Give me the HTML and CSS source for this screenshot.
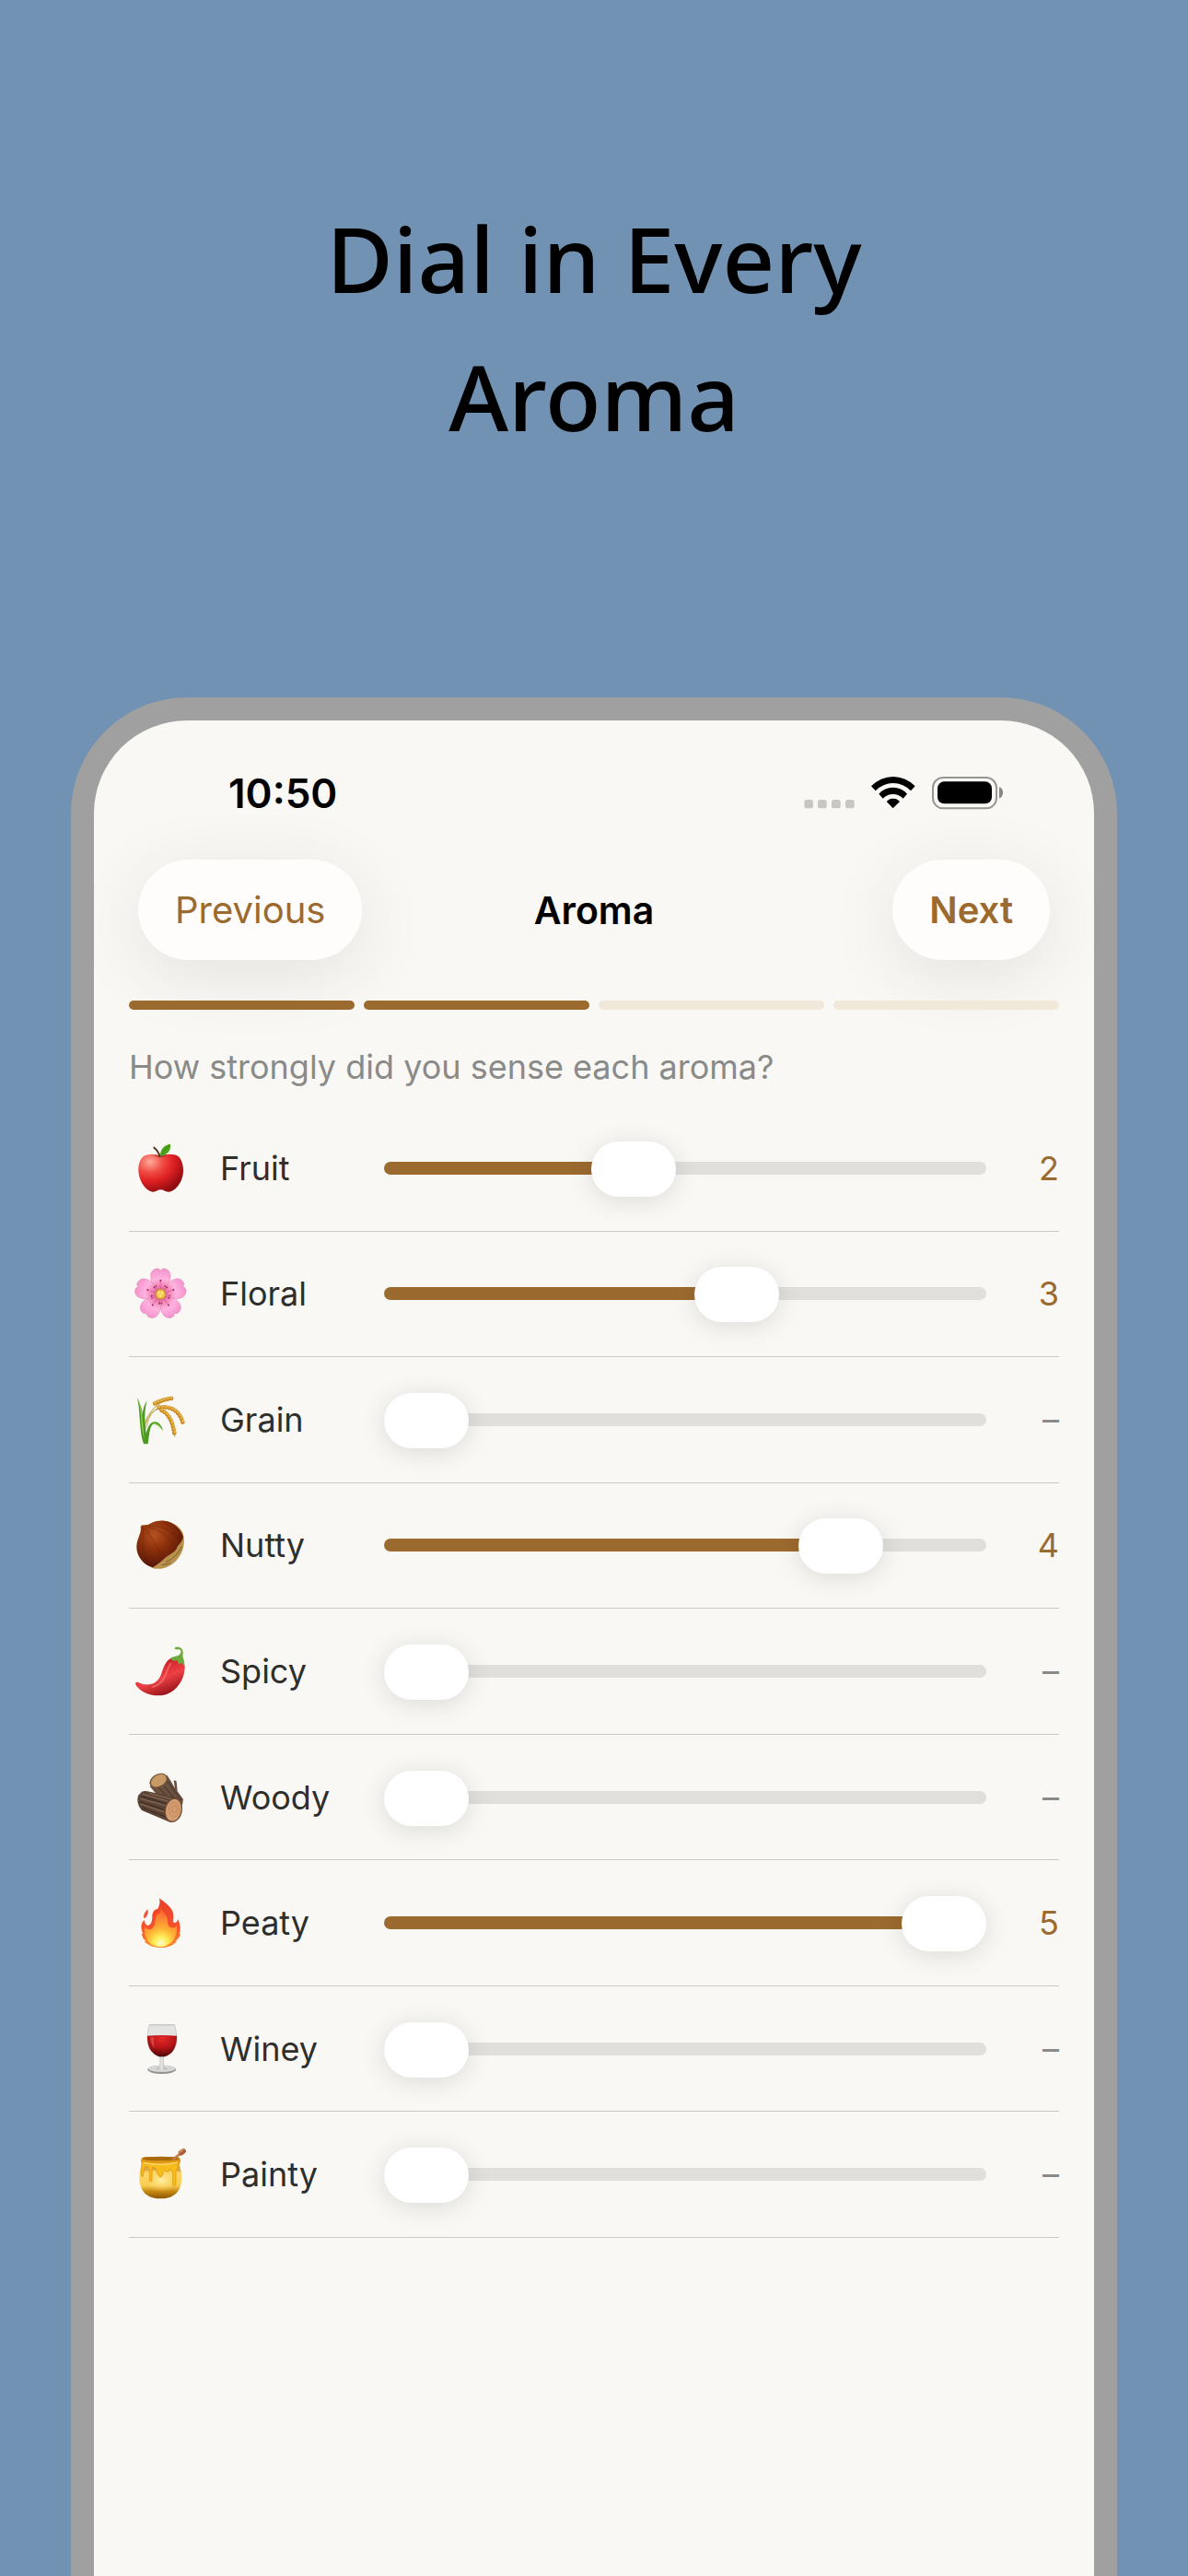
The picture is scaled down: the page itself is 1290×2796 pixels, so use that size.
FILE: index.html
```html
<!DOCTYPE html>
<html lang="en">
<head>
<meta charset="utf-8">
<meta name="viewport" content="width=device-width, initial-scale=1">
<title>Dial in Every Aroma</title>
<link rel="stylesheet" href="styles.css">
</head>
<body>
<main class="stage">
  <h1 class="headline">Dial in Every<br>Aroma</h1>

  <section class="phone">
    <div class="status">
      <span class="clock">10:50</span>
      <svg class="status-icons" viewBox="69 66 648 108" aria-hidden="true">
        <g fill="#c8c7c4">
          <rect x="70" y="141" width="29" height="28" rx="8"/>
          <rect x="114" y="141" width="29" height="28" rx="8"/>
          <rect x="159" y="141" width="29" height="28" rx="8"/>
          <rect x="204" y="141" width="29" height="28" rx="8"/>
        </g>
        <path d="M288 97A98 98 0 0 1 431 97L417 112A79 79 0 0 0 302 112Z"/>
        <path d="M313 122A61 61 0 0 1 405 122L392 137A46 46 0 0 0 326 137Z"/>
        <path d="M338 147A28 28 0 0 1 381 147L359 169Z"/>
        <rect x="489" y="69" width="207" height="100" rx="33" fill="none" stroke="#979693" stroke-width="6"/>
        <rect x="504" y="82" width="177" height="72" rx="22"/>
        <path d="M705 100Q717 104 717 118T705 137Z" fill="#888785"/>
      </svg>
    </div>

    <nav class="nav">
      <button class="pill" type="button">Previous</button>
      <h2 class="nav-title">Aroma</h2>
      <button class="pill pill-next" type="button">Next</button>
    </nav>

    <div class="steps">
      <span class="step step-done"></span>
      <span class="step step-done"></span>
      <span class="step"></span>
      <span class="step"></span>
    </div>

    <p class="question">How strongly did you sense each aroma?</p>

    <div class="aromas">
      <div class="row">
        <svg class="icon" viewBox="42 84 180 180" aria-hidden="true">
          <defs><radialGradient id="apple" cx=".26" cy=".2" r=".85"><stop offset="0" stop-color="#ffaa9c"/><stop offset=".35" stop-color="#ee4a40"/><stop offset=".62" stop-color="#df1f23"/><stop offset="1" stop-color="#8d0d10"/></radialGradient></defs>
          <path fill="url(#apple)" d="M133 136C120 128 105 127 92 130C70 133 61 155 61 180C61 210 80 242 102 250C116 254 122 244 133 244C145 244 151 254 166 250C189 240 207 212 207 182C207 155 197 133 178 130C160 127 147 128 133 136Z"/>
          <path fill="#7e1512" opacity=".5" d="M110 132Q133 128 156 132Q133 145 110 132Z"/>
          <path fill="none" stroke="#54301f" stroke-width="6" stroke-linecap="round" d="M131 136Q126 118 112 107"/>
          <path fill="#4ba31a" d="M133 134C130 112 146 98 165 95C168 116 155 131 133 134Z"/>
          <path fill="none" stroke="#2f7d10" stroke-width="2" d="M135 132Q146 112 162 99"/>
        </svg>
        <label class="name" for="fruit">Fruit</label>
        <input class="slider" id="fruit" type="range" min="0" max="5" value="2" style="--level: 2">
        <output class="value" for="fruit">2</output>
      </div>

      <div class="row">
        <svg class="icon" viewBox="42 494 180 180" aria-hidden="true">
          <defs>
            <radialGradient id="petal" gradientUnits="userSpaceOnUse" cx="0" cy="0" r="84"><stop offset="0" stop-color="#c9407a"/><stop offset=".3" stop-color="#ee7fb0"/><stop offset=".6" stop-color="#ffb3e0"/><stop offset="1" stop-color="#f592cc"/></radialGradient>
            <g id="petal-shape">
              <path fill="url(#petal)" stroke="#dc7fae" stroke-width="1.5" d="M0 -4C-20 -18 -34 -42 -32 -62C-31 -78 -15 -86 -5 -82L0 -76L5 -82C15 -86 31 -78 32 -62C34 -42 20 -18 0 -4Z"/>
              <path stroke="#c8487f" stroke-width="1.5" d="M0 -12V-44M-6 -12L-15 -26M6 -12L15 -26"/>
              <g fill="#982457"><circle cy="-44" r="3"/><circle cx="-15" cy="-26" r="3"/><circle cx="15" cy="-26" r="3"/></g>
            </g>
          </defs>
          <g transform="translate(133 586)">
            <use href="#petal-shape"/><use href="#petal-shape" transform="rotate(72)"/><use href="#petal-shape" transform="rotate(144)"/><use href="#petal-shape" transform="rotate(216)"/><use href="#petal-shape" transform="rotate(288)"/>
            <circle r="17" fill="#d89c2c"/><circle r="13" fill="#f3cf4e"/>
            <g fill="#fff0a0"><circle cx="-5" cy="-5" r="3"/><circle cx="5" cy="-4" r="3"/><circle cx="0" cy="5" r="3"/></g>
          </g>
        </svg>
        <label class="name" for="floral">Floral</label>
        <input class="slider" id="floral" type="range" min="0" max="5" value="3" style="--level: 3">
        <output class="value" for="floral">3</output>
      </div>

      <div class="row">
        <svg class="icon" viewBox="42 904 180 180" aria-hidden="true">
          <g fill="none" stroke="#b9a64a" stroke-width="3"><path d="M80 1015Q92 950 168 922"/><path d="M82 1010Q100 962 130 955Q190 950 209 1004"/><path d="M86 1020Q98 960 132 958Q172 975 180 1050"/></g>
          <path fill="#4c9a24" d="M78 1073C62 1030 68 960 56 921C70 948 74 965 74 978C76 955 82 942 89 932C82 955 80 985 84 1016L86 1040C92 1010 104 998 118 1001C130 1004 138 1016 141 1029C128 1015 116 1004 106 1010C96 1022 96 1050 92 1073Z"/>
          <path fill="#91ce4c" d="M70 990C68 960 63 940 58 926C70 950 72 965 74 990L80 1060Q70 1020 70 990ZM103 1006Q124 998 139 1026Q120 1006 103 1006Z"/>
          <g fill="none" stroke-linecap="round"><g stroke="#c98a22" stroke-width="14" stroke-dasharray="1 10"><path d="M115 941Q140 928 170 924"/><path d="M128 954Q188 946 205 1002"/><path d="M136 963Q172 980 179 1046"/></g><g stroke="#e8b54d" stroke-width="8" stroke-dasharray="1 10"><path d="M115 939Q140 926 170 922"/><path d="M128 952Q188 944 206 999"/><path d="M137 961Q174 978 181 1043"/></g></g>
        </svg>
        <label class="name" for="grain">Grain</label>
        <input class="slider slider-empty" id="grain" type="range" min="0" max="5" value="0">
        <output class="value value-none" for="grain">–</output>
      </div>

      <div class="row">
        <svg class="icon" viewBox="42 113 180 180" aria-hidden="true">
          <defs><radialGradient id="nut" cx=".38" cy=".3" r=".75"><stop offset="0" stop-color="#b4511f"/><stop offset=".45" stop-color="#8a2f0b"/><stop offset="1" stop-color="#4d1207"/></radialGradient></defs>
          <path fill="#b8924c" d="M69 138L92 137C130 115 180 120 204 160C222 205 195 258 155 274C130 284 115 280 104 277Z"/>
          <path fill="url(#nut)" d="M74 140C90 138 96 136 105 130C145 113 190 130 207 175C204 195 190 200 186 212C182 226 160 235 152 242C142 248 132 262 108 276C80 270 54 240 55 208C56 180 72 165 68 143Z"/>
          <path fill="none" stroke="#7d6030" stroke-width="3" d="M150 258Q184 246 202 208M138 268Q150 268 166 260"/>
          <g fill="none" stroke="#53190a" stroke-width="2" opacity=".5"><path d="M78 150Q68 200 88 252M84 148Q110 190 140 240M92 144Q145 155 180 205M98 140Q160 140 195 185"/></g>
        </svg>
        <label class="name" for="nutty">Nutty</label>
        <input class="slider" id="nutty" type="range" min="0" max="5" value="4" style="--level: 4">
        <output class="value" for="nutty">4</output>
      </div>

      <div class="row">
        <svg class="icon" viewBox="42 523 180 180" aria-hidden="true">
          <defs><linearGradient id="chili" x1=".3" y1=".2" x2=".7" y2="1"><stop offset="0" stop-color="#c81f28"/><stop offset=".45" stop-color="#ee4145"/><stop offset="1" stop-color="#8c0d14"/></linearGradient></defs>
          <path fill="url(#chili)" d="M52 650C56 645 64 652 75 655C105 660 124 650 134 625C145 595 152 572 172 570C190 572 212 580 212 598C212 640 185 680 145 690C105 698 66 680 52 657Z"/>
          <path fill="none" stroke="#ff8a85" stroke-width="6" stroke-linecap="round" opacity=".5" d="M166 588Q154 606 148 628Q137 655 108 664"/>
          <path fill="#6fa83b" d="M163 572C175 563 186 566 194 560C202 552 201 544 193 542C188 541 184 543 180 541C177 536 182 533 190 534C207 535 208 552 205 565C208 573 212 582 211 597L201 586L193 590L186 577L176 579Z"/>
        </svg>
        <label class="name" for="spicy">Spicy</label>
        <input class="slider slider-empty" id="spicy" type="range" min="0" max="5" value="0">
        <output class="value value-none" for="spicy">–</output>
      </div>

      <div class="row">
        <svg class="icon" viewBox="42 932 180 180" aria-hidden="true">
          <path fill="#69503f" d="M98 986L154 949Q166 966 180 992L176 968Q180 962 185 970L188 1002L207 1028L204 1046L150 1046Z"/>
          <g fill="none" stroke="#3f2e25" stroke-width="3"><path d="M145 985L190 1040M156 970L200 1030M128 992L165 1030"/></g>
          <ellipse cx="126" cy="967" rx="31" ry="21" transform="rotate(-30 126 967)" fill="#745339"/>
          <ellipse cx="127" cy="967" rx="27" ry="18" transform="rotate(-30 127 967)" fill="#c89a65"/>
          <path fill="#5b4336" d="M72 1003Q80 999 90 1002L186 1022L202 1048L165 1103L72 1064Q52 1042 60 1016Z"/>
          <g fill="none" stroke="#8d705a" stroke-width="3"><path d="M74 1011L160 1035M68 1026L148 1048M66 1042L145 1070M96 1008L168 1027"/></g>
          <g fill="none" stroke="#362720" stroke-width="3"><path d="M70 1018L150 1042M64 1036L142 1060M74 1056L148 1084"/></g>
          <ellipse cx="175" cy="1063" rx="29" ry="40" transform="rotate(12 175 1063)" fill="#6c4a35"/>
          <ellipse cx="175" cy="1063" rx="25" ry="36" transform="rotate(12 175 1063)" fill="#d39d70"/>
          <g fill="none" stroke="#b57e54" stroke-width="2"><ellipse cx="177" cy="1061" rx="16" ry="23"/><ellipse cx="178" cy="1060" rx="8" ry="12"/></g>
        </svg>
        <label class="name" for="woody">Woody</label>
        <input class="slider slider-empty" id="woody" type="range" min="0" max="5" value="0">
        <output class="value value-none" for="woody">–</output>
      </div>

      <div class="row">
        <svg class="icon" viewBox="42 82 180 180" aria-hidden="true">
          <defs>
            <linearGradient id="flame" x1="0" y1="0" x2="0" y2="1"><stop offset="0" stop-color="#e8402b"/><stop offset=".6" stop-color="#f6532a"/><stop offset="1" stop-color="#ff8d25"/></linearGradient>
            <radialGradient id="core" gradientUnits="userSpaceOnUse" cx="134" cy="238" r="105"><stop offset="0" stop-color="#fffbd0"/><stop offset=".2" stop-color="#ffee55"/><stop offset=".45" stop-color="#ffb235"/><stop offset="1" stop-color="#fa6430"/></radialGradient>
          </defs>
          <path fill="url(#flame)" d="M129 92C150 108 168 120 174 140C178 156 172 164 176 172C184 174 188 166 190 160C198 180 199 196 194 208L198 207C196 218 188 228 180 232L186 232C172 248 150 254 133 253C112 253 92 246 80 232L87 233C76 226 72 216 72 206L76 208C68 190 68 176 79 163C82 174 86 180 92 181C106 178 106 160 106 146C108 134 114 128 124 126C130 116 132 104 129 92Z"/>
          <path fill="url(#core)" d="M133 122C138 138 156 146 156 167C156 186 166 190 176 188C182 186 184 184 186 180C188 200 182 224 168 236Q150 251 133 251Q106 250 92 232C82 216 78 200 82 184C88 194 96 196 104 192C118 182 114 162 119 150C123 142 130 144 132 136Q134 128 133 122Z"/>
          <path fill="#ee553f" d="M91 128C95 144 88 154 79 158C76 144 84 136 91 128Z"/>
        </svg>
        <label class="name" for="peaty">Peaty</label>
        <input class="slider" id="peaty" type="range" min="0" max="5" value="5" style="--level: 5">
        <output class="value" for="peaty">5</output>
      </div>

      <div class="row">
        <svg class="icon" viewBox="42 492 180 180" aria-hidden="true">
          <defs>
            <radialGradient id="wine" cx=".5" cy=".15" r=".85"><stop offset="0" stop-color="#e3292a"/><stop offset=".5" stop-color="#b91518"/><stop offset="1" stop-color="#4e0608"/></radialGradient>
            <linearGradient id="glass"><stop offset="0" stop-color="#a8a8a8"/><stop offset=".5" stop-color="#e6e6e6"/><stop offset="1" stop-color="#999"/></linearGradient>
          </defs>
          <ellipse cx="137" cy="649" rx="46" ry="14" fill="#929291"/>
          <ellipse cx="137" cy="646" rx="44" ry="11" fill="#d6d6d5"/>
          <path fill="url(#glass)" d="M130 598H144V635Q146 644 155 648H119Q128 644 130 635Z"/>
          <path fill="#e3e3e2" stroke="#b8b8b7" stroke-width="2" d="M97 503H178Q184 520 186 545Q186 592 145 608H129Q90 592 90 545Q91 520 97 503Z"/>
          <path fill="url(#wine)" d="M90 539Q137 535 186 539C187 575 172 600 145 607H129C103 598 89 575 90 539Z"/>
          <path stroke="#c5c5c4" stroke-width="3" d="M97 504H178"/>
          <path fill="#f36b64" opacity=".5" d="M100 543H110L113 580Q99 564 100 543Z"/>
        </svg>
        <label class="name" for="winey">Winey</label>
        <input class="slider slider-empty" id="winey" type="range" min="0" max="5" value="0">
        <output class="value value-none" for="winey">–</output>
      </div>

      <div class="row">
        <svg class="icon" viewBox="42 902 180 180" aria-hidden="true">
          <defs>
            <linearGradient id="pot" x1="0" y1="0" x2="0" y2="1"><stop offset="0" stop-color="#f5b62c"/><stop offset=".35" stop-color="#fbd668"/><stop offset=".65" stop-color="#f7cc52"/><stop offset=".8" stop-color="#c98a13"/><stop offset="1" stop-color="#8b5607"/></linearGradient>
            <radialGradient id="shine" cx=".5" cy=".5" r=".5"><stop offset="0" stop-color="#fff0a8"/><stop offset="1" stop-color="#fbd35b" stop-opacity="0"/></radialGradient>
          </defs>
          <path fill="url(#pot)" d="M76 950H190C202 975 206 1008 198 1030C190 1056 168 1071 133 1071C98 1071 76 1056 68 1030C60 1008 64 975 76 950Z"/>
          <ellipse cx="136" cy="1012" rx="54" ry="38" fill="url(#shine)"/>
          <path fill="#d79b49" opacity=".8" d="M75 956L192 956L199 984Q133 972 68 984Z"/>
          <path fill="#f6bc1c" stroke="#d9900e" stroke-width="2" d="M72 954H194Q188 975 183 984V1026Q178 1036 173 1026V986Q168 972 162 978Q156 990 151 980Q146 976 142 985Q138 1004 130 1000Q124 994 120 980Q110 960 105 975V1012Q101 1020 97 1012V980Q92 960 80 970L76 998Q70 1004 70 994Z"/>
          <rect x="69" y="936" width="129" height="24" rx="12" fill="#e09a15"/>
          <path fill="none" stroke="#ffd260" stroke-width="5" stroke-linecap="round" d="M78 955Q133 966 188 954"/>
          <ellipse cx="134" cy="941" rx="60" ry="7" fill="#a96a0c"/>
          <path stroke="#c27a4c" stroke-width="8" stroke-linecap="round" d="M174 943L200 923"/>
          <path stroke="#a96038" stroke-width="17" stroke-linecap="round" d="M200 922L207 917"/>
          <path stroke="#dfa47a" stroke-width="4" stroke-linecap="round" d="M196 920L206 912"/>
        </svg>
        <label class="name" for="painty">Painty</label>
        <input class="slider slider-empty" id="painty" type="range" min="0" max="5" value="0">
        <output class="value value-none" for="painty">–</output>
      </div>
    </div>
  </section>
</main>
</body>
</html>
```
FILE: styles.css
```css
:root {
  --accent: #9b6a2f;
  --track: #e0dfdb;
  --screen: #f9f8f4;
  --thumb: 92px;
}

* {
  box-sizing: border-box;
}

body {
  margin: 0;
  background: #7192b2;
  color: #000;
  font-family: Inter, "Liberation Sans", sans-serif;
}

.stage {
  display: flex;
  flex-direction: column;
  min-height: 100vh;
  padding: 205px 77px 0;
}

.headline {
  margin: 0 0 252px;
  font-family: "Noto Sans", sans-serif;
  font-size: 99px;
  font-weight: 500;
  line-height: 150px;
  text-align: center;
}

.phone {
  flex: 1;
  padding: 50px 38px 0;
  background: var(--screen);
  border: 25px solid #a0a0a0;
  border-bottom: 0;
  border-radius: 126px 126px 0 0;
}

.status {
  display: flex;
  align-items: center;
  justify-content: space-between;
  height: 57px;
  padding: 0 61px 0 108px;
}

.clock {
  font-size: 44px;
  font-weight: 600;
}

.status-icons {
  width: 216px;
  height: 36px;
}

.nav {
  display: grid;
  grid-template-columns: 1fr auto 1fr;
  align-items: center;
  margin-top: 44px;
  padding: 0 10px;
}

.pill {
  justify-self: start;
  height: 109px;
  padding: 0 40px;
  border: 0;
  border-radius: 55px;
  background: #fefdfb;
  box-shadow: 0 16px 80px rgba(0, 0, 0, 0.09);
  color: var(--accent);
  font: 400 40px Inter, "Liberation Sans", sans-serif;
}

.pill-next {
  justify-self: end;
  font-weight: 600;
}

.nav-title {
  margin: 0;
  font-size: 41px;
  font-weight: 600;
}

.steps {
  display: grid;
  grid-template-columns: repeat(4, 1fr);
  gap: 10px;
  margin-top: 44px;
}

.step {
  height: 10px;
  border-radius: 5px;
  background: #f0e8d9;
}

.step-done {
  background: var(--accent);
}

.question {
  margin: 40px 0 20px;
  color: #8a8a89;
  font-size: 36px;
  line-height: 44px;
}

.aromas {
  display: grid;
  grid-auto-rows: 1fr;
  min-height: 1229px;
}

.row {
  display: grid;
  grid-template-columns: 64px 143px 1fr 44px;
  align-items: center;
  gap: 35px;
  border-bottom: 1px solid #c9c8c5;
}

.icon {
  justify-self: end;
  width: 60px;
  height: 60px;
}

.name {
  color: #2e2e2d;
  font-size: 36px;
}

.slider {
  width: 100%;
  height: 60px;
  margin: 0;
  background: none;
  appearance: none;
  --fill: calc(var(--thumb) / 2 + (100% - var(--thumb)) * var(--level) / 5);
}

.slider::-webkit-slider-runnable-track {
  height: 14px;
  border-radius: 7px;
  background: linear-gradient(to right, var(--accent) var(--fill), var(--track) var(--fill));
}

.slider-empty::-webkit-slider-runnable-track {
  background: var(--track);
}

.slider::-webkit-slider-thumb {
  width: var(--thumb);
  height: 60px;
  margin-top: -22px;
  border-radius: 30px;
  background: #fff;
  box-shadow: 0 4px 28px rgba(0, 0, 0, 0.12);
  appearance: none;
}

.value {
  color: var(--accent);
  font-size: 36px;
  text-align: right;
}

.value-none {
  color: #8a8a89;
}
```
